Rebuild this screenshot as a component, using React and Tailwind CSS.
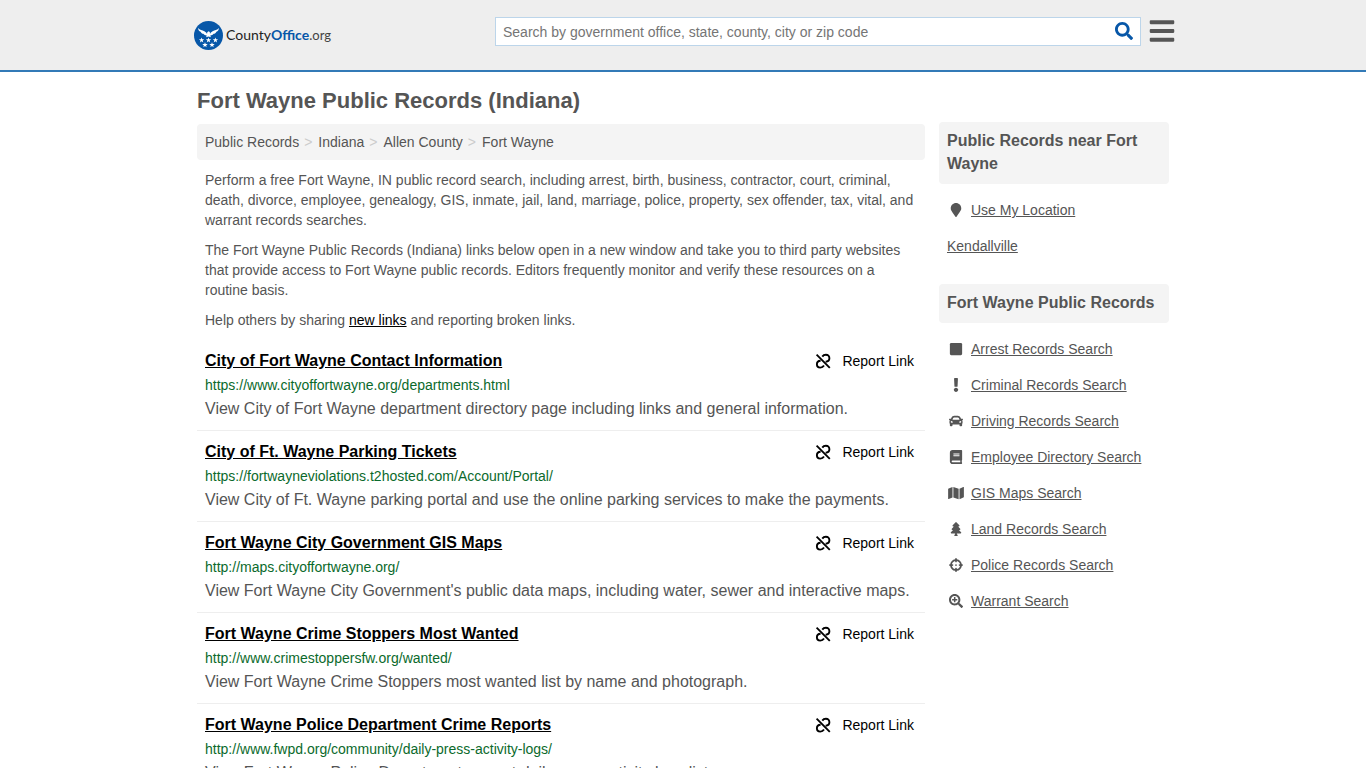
import React from 'react';
import { FaBars, FaBook, FaCar, FaExclamation, FaMap, FaMapMarker, FaSearch, FaSearchPlus, FaSquare, FaTree } from "react-icons/fa";
import { FaCrosshairs } from "react-icons/fa6";

const crumbs = ['Public Records', 'Indiana', 'Allen County', 'Fort Wayne'];

const records = [
  {
    title: 'City of Fort Wayne Contact Information',
    url: 'https://www.cityoffortwayne.org/departments.html',
    text: 'View City of Fort Wayne department directory page including links and general information.',
  },
  {
    title: 'City of Ft. Wayne Parking Tickets',
    url: 'https://fortwayneviolations.t2hosted.com/Account/Portal/',
    text: 'View City of Ft. Wayne parking portal and use the online parking services to make the payments.',
  },
  {
    title: 'Fort Wayne City Government GIS Maps',
    url: 'http://maps.cityoffortwayne.org/',
    text: "View Fort Wayne City Government's public data maps, including water, sewer and interactive maps.",
  },
  {
    title: 'Fort Wayne Crime Stoppers Most Wanted',
    url: 'http://www.crimestoppersfw.org/wanted/',
    text: 'View Fort Wayne Crime Stoppers most wanted list by name and photograph.',
  },
  {
    title: 'Fort Wayne Police Department Crime Reports',
    url: 'http://www.fwpd.org/community/daily-press-activity-logs/',
    text: 'View Fort Wayne Police Department current daily press activity logs list.',
  },
];

const searches = [
  { label: 'Arrest Records Search', icon: FaSquare },
  { label: 'Criminal Records Search', icon: FaExclamation },
  { label: 'Driving Records Search', icon: FaCar },
  { label: 'Employee Directory Search', icon: FaBook },
  { label: 'GIS Maps Search', icon: FaMap },
  { label: 'Land Records Search', icon: FaTree },
  { label: 'Police Records Search', icon: FaCrosshairs },
  { label: 'Warrant Search', icon: FaSearchPlus },
];

const STAR = 'M0 -2.8 L0.7 -0.9 L2.7 -0.9 L1.1 0.4 L1.7 2.3 L0 1.1 L-1.7 2.3 L-1.1 0.4 L-2.7 -0.9 L-0.7 -0.9 Z';

const Logo = () => (
  <a href="#home" className="flex items-center gap-[3px]">
    <svg viewBox="0 0 29 29" className="h-[29px] w-[29px]" aria-hidden="true">
      <circle cx="14.5" cy="14.5" r="14.5" fill="#0757a8" />
      <g fill="#fff">
        {/* wings, body and tail of the eagle */}
        <path d="M4 7 C5.6 9 8.4 9.2 10.4 10.2 C12 11 12.6 12 13 13 L13.3 11.2 L14.6 10.2 L15.8 11 L16 13 C16.4 12 17 11 18.6 10.2 C20.6 9.2 23.4 9 25 7 C24.8 9 23.8 10.2 22.4 10.7 C22 12 20.8 12.7 19.6 12.8 C18.8 14 17.4 14.5 16.2 14.4 L17 16.2 L14.5 15.5 L12 16.2 L12.8 14.4 C11.6 14.5 10.2 14 9.4 12.8 C8.2 12.7 7 12 6.6 10.7 C5.2 10.2 4.2 9 4 7 Z" />
        <path d={STAR} transform="translate(7.6 19.2)" />
        <path d={STAR} transform="translate(14.5 19.2)" />
        <path d={STAR} transform="translate(21.4 19.2)" />
        <path d={STAR} transform="translate(11 24)" />
        <path d={STAR} transform="translate(18 24)" />
      </g>
    </svg>
    <span className="font-[Lato,sans-serif] text-[14px] leading-5 text-[#222]">
      County<b className="text-[#0757a8]">Office</b><span className="text-[13px] text-[#444]">.org</span>
    </span>
  </a>
);

const UnlinkIcon = () => (
  <svg viewBox="0 0 16 16" className="h-4 w-4" fill="none" stroke="currentColor" strokeWidth="1.9" aria-hidden="true">
    <path d="M1.6 1.6 L14.8 14.8" />
    <path d="M7.3 3.6 C8.4 2 9.8 1.8 10.9 1.8 C13 1.8 14.4 3.3 14.4 5.2 C14.4 7.2 13 8.6 10.6 8.7" />
    <path d="M9 12.6 C8 14.2 6.5 14.6 5.3 14.6 C3.2 14.6 1.9 13.1 1.9 11.2 C1.9 9.2 3.2 7.8 5.6 7.7" />
  </svg>
);

const Header = () => (
  <header className="bg-[#eeeeee] border-b-2 border-[#337ab7]">
    <div className="max-w-[984px] h-[70px] mx-auto pl-[3px] flex items-center justify-between">
      <Logo />
      <div className="flex items-center gap-2 mb-2">
        <form className="flex items-center w-[646px] h-[29px] bg-white border border-[#bcd5ea] px-[7px]">
          <input
            type="text"
            aria-label="Search"
            placeholder="Search by government office, state, county, city or zip code"
            className="grow pt-[2px] text-sm outline-none placeholder:text-[#757575]"
          />
          <button type="button" aria-label="Submit search" className="text-[#0757a8]">
            <FaSearch className="h-[18px] w-[18px]" />
          </button>
        </form>
        <button type="button" aria-label="Menu" className="text-[#555]">
          <FaBars className="h-7 w-[26px]" />
        </button>
      </div>
    </div>
  </header>
);

const RecordRow = ({ record }) => (
  <li className="px-2 py-[9px] border-b border-[#eee]">
    <div className="flex items-center justify-between">
      <a href={record.url} className="text-base leading-6 font-bold text-black underline">{record.title}</a>
      <button type="button" className="flex items-center gap-[11px] pr-[3px] text-sm leading-6 text-black">
        <UnlinkIcon />
        Report Link
      </button>
    </div>
    <div className="text-sm leading-6 text-[#0b6a2c]">{record.url}</div>
    <p className="text-base leading-6">{record.text}</p>
  </li>
);

const SideHeading = ({ children }) => (
  <h2 className="bg-[#f4f4f4] rounded-sm px-2 pt-[7px] pb-[9px] mb-2 text-base leading-[23px] font-bold">{children}</h2>
);

const SideLink = ({ label, icon: Icon }) => (
  <li className="flex items-center gap-[6px] h-9 px-2 text-sm">
    {Icon && (
      <span className="w-[18px] flex justify-center">
        <Icon className="h-[14px] w-4" />
      </span>
    )}
    <a href="#search" className="underline">{label}</a>
  </li>
);

const App = () => {
  return (
    <div className="font-['Liberation_Sans',Arial,sans-serif] text-[#555] bg-white">
      <Header />
      <div className="max-w-[972px] mx-auto flex gap-[14px]">
        <main className="grow">
          <h1 className="text-[22px] leading-6 font-bold mt-[17px] mb-[11px]">Fort Wayne Public Records (Indiana)</h1>
          <nav className="bg-[#f4f4f4] rounded-sm px-2 py-2 mb-[10px] text-sm leading-5">
            <ol className="flex">
              {crumbs.map((crumb, i) => (
                <li key={crumb}>
                  {i > 0 && <span className="pl-[5px] pr-[6px] text-[#ccc]">&gt;</span>}
                  <a href="#crumb">{crumb}</a>
                </li>
              ))}
            </ol>
          </nav>
          <div className="px-2 text-sm leading-5">
            <p className="mb-[10px]">
              Perform a free Fort Wayne, IN public record search, including arrest, birth, business, contractor, court, criminal, death, divorce, employee, genealogy, GIS, inmate, jail, land, marriage, police, property, sex offender, tax, vital, and warrant records searches.
            </p>
            <p className="mb-[10px]">
              The Fort Wayne Public Records (Indiana) links below open in a new window and take you to third party websites that provide access to Fort Wayne public records. Editors frequently monitor and verify these resources on a routine basis.
            </p>
            <p className="mb-[10px]">
              Help others by sharing <a href="#new" className="text-black underline">new links</a> and reporting broken links.
            </p>
          </div>
          <ul>
            {records.map((record) => (
              <RecordRow key={record.url} record={record} />
            ))}
          </ul>
        </main>
        <aside className="w-[230px] shrink-0 pt-[50px]">
          <SideHeading>Public Records near Fort Wayne</SideHeading>
          <ul className="mb-5">
            <SideLink label="Use My Location" icon={FaMapMarker} />
            <SideLink label="Kendallville" />
          </ul>
          <SideHeading>Fort Wayne Public Records</SideHeading>
          <ul>
            {searches.map((item) => (
              <SideLink key={item.label} label={item.label} icon={item.icon} />
            ))}
          </ul>
        </aside>
      </div>
    </div>
  );
};

export default App;
